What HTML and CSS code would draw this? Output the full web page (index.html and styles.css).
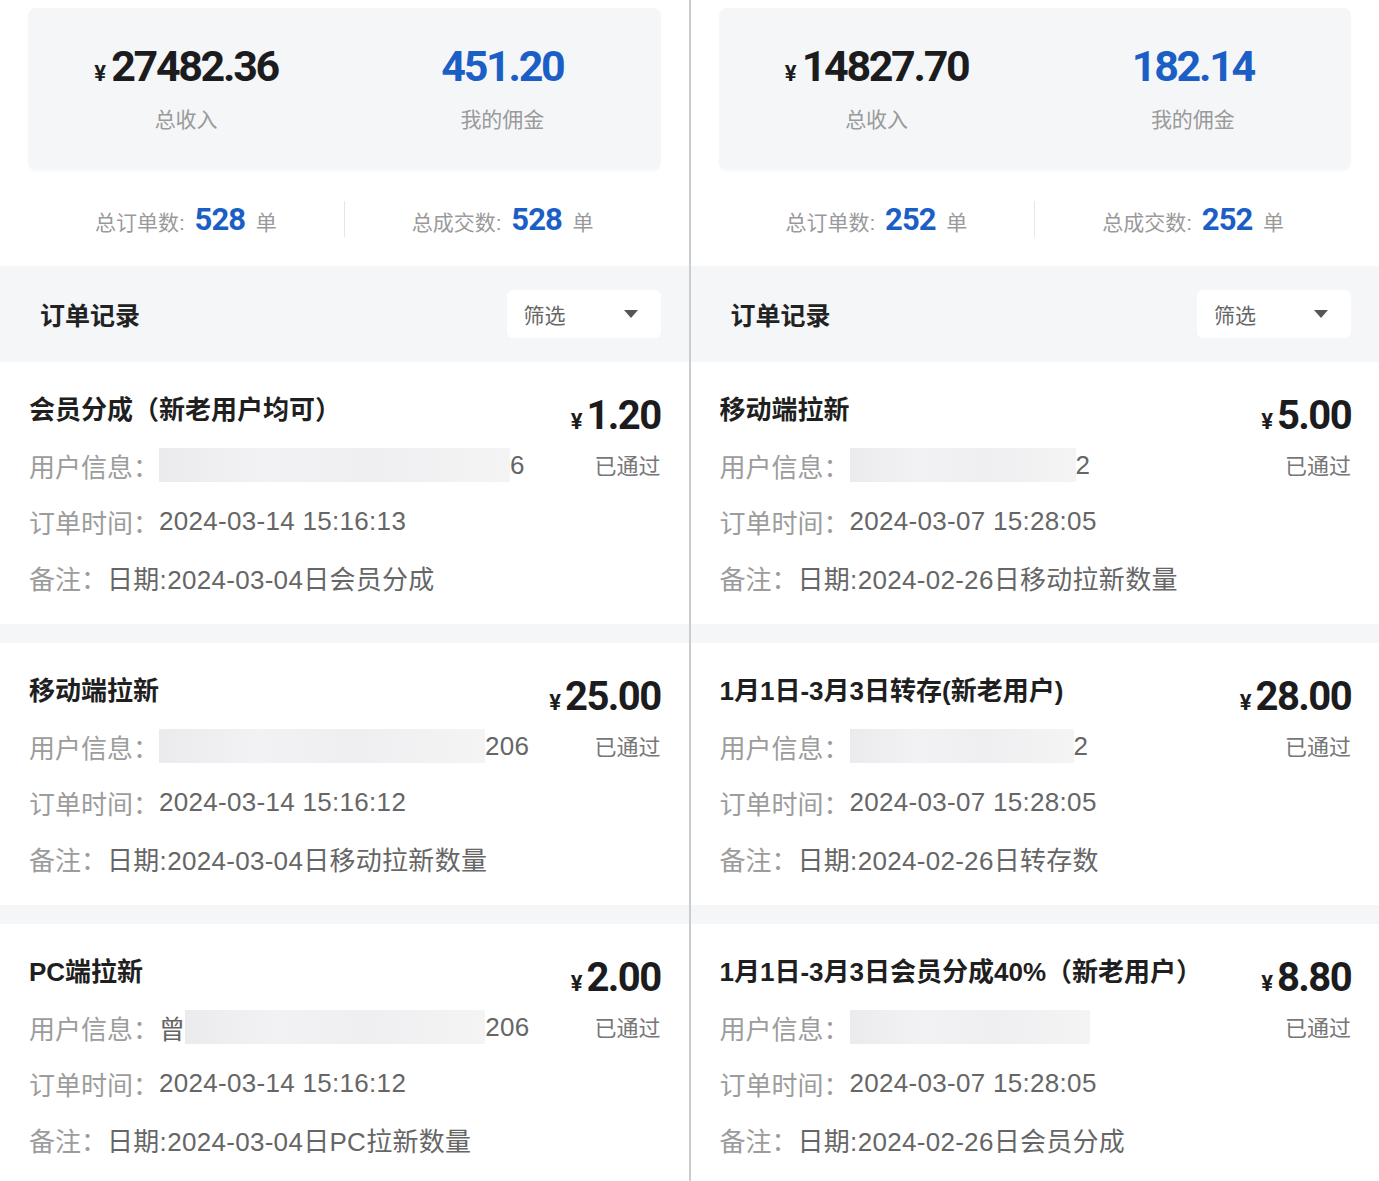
FILE: index.html
```html
<!DOCTYPE html>
<html lang="zh-CN">
<head>
    <meta charset="UTF-8">
    <meta name="viewport" content="width=device-width, initial-scale=1.0">
    <title>订单记录</title>
    <link rel="stylesheet" href="styles.css">
</head>
<body>
    <div class="page">
        <!-- left account -->
        <section class="panel">
            <div class="summary">
                <div class="summary-item">
                    <div class="amount"><span class="yen">¥</span>27482.36</div>
                    <div class="summary-label">总收入</div>
                </div>
                <div class="summary-item">
                    <div class="amount blue">451.20</div>
                    <div class="summary-label">我的佣金</div>
                </div>
            </div>
            <div class="stats">
                <div class="stat">总订单数: <span class="stat-num">528</span> 单</div>
                <div class="stat-divider"></div>
                <div class="stat">总成交数: <span class="stat-num">528</span> 单</div>
            </div>
            <div class="records-head">
                <h2>订单记录</h2>
                <div class="filter">
                    <span>筛选</span>
                    <svg width="14" height="8" viewBox="0 0 14 8"><path d="M0 0h14L7 8z" fill="#555"/></svg>
                </div>
            </div>
            <div class="orders">
                <div class="order">
                    <div class="order-top">
                        <div class="order-title">会员分成（新老用户均可）</div>
                        <div class="price"><span class="yen">¥</span>1.20</div>
                    </div>
                    <div class="order-row">
                        <div><span class="label">用户信息：</span><span class="mask" style="width: 351px"></span><span class="value">6</span></div>
                        <div class="status">已通过</div>
                    </div>
                    <div class="order-row"><div><span class="label">订单时间：</span><span class="value">2024-03-14 15:16:13</span></div></div>
                    <div class="order-row"><div><span class="label">备注：</span><span class="value">日期:2024-03-04日会员分成</span></div></div>
                </div>
                <div class="order">
                    <div class="order-top">
                        <div class="order-title">移动端拉新</div>
                        <div class="price"><span class="yen">¥</span>25.00</div>
                    </div>
                    <div class="order-row">
                        <div><span class="label">用户信息：</span><span class="mask" style="width: 326px"></span><span class="value">206</span></div>
                        <div class="status">已通过</div>
                    </div>
                    <div class="order-row"><div><span class="label">订单时间：</span><span class="value">2024-03-14 15:16:12</span></div></div>
                    <div class="order-row"><div><span class="label">备注：</span><span class="value">日期:2024-03-04日移动拉新数量</span></div></div>
                </div>
                <div class="order">
                    <div class="order-top">
                        <div class="order-title">PC端拉新</div>
                        <div class="price"><span class="yen">¥</span>2.00</div>
                    </div>
                    <div class="order-row">
                        <div><span class="label">用户信息：</span><span class="value">曾</span><span class="mask" style="width: 300px"></span><span class="value">206</span></div>
                        <div class="status">已通过</div>
                    </div>
                    <div class="order-row"><div><span class="label">订单时间：</span><span class="value">2024-03-14 15:16:12</span></div></div>
                    <div class="order-row"><div><span class="label">备注：</span><span class="value">日期:2024-03-04日PC拉新数量</span></div></div>
                </div>
            </div>
        </section>

        <div class="split"></div>

        <!-- right account -->
        <section class="panel">
            <div class="summary">
                <div class="summary-item">
                    <div class="amount"><span class="yen">¥</span>14827.70</div>
                    <div class="summary-label">总收入</div>
                </div>
                <div class="summary-item">
                    <div class="amount blue">182.14</div>
                    <div class="summary-label">我的佣金</div>
                </div>
            </div>
            <div class="stats">
                <div class="stat">总订单数: <span class="stat-num">252</span> 单</div>
                <div class="stat-divider"></div>
                <div class="stat">总成交数: <span class="stat-num">252</span> 单</div>
            </div>
            <div class="records-head">
                <h2>订单记录</h2>
                <div class="filter">
                    <span>筛选</span>
                    <svg width="14" height="8" viewBox="0 0 14 8"><path d="M0 0h14L7 8z" fill="#555"/></svg>
                </div>
            </div>
            <div class="orders">
                <div class="order">
                    <div class="order-top">
                        <div class="order-title">移动端拉新</div>
                        <div class="price"><span class="yen">¥</span>5.00</div>
                    </div>
                    <div class="order-row">
                        <div><span class="label">用户信息：</span><span class="mask" style="width: 226px"></span><span class="value">2</span></div>
                        <div class="status">已通过</div>
                    </div>
                    <div class="order-row"><div><span class="label">订单时间：</span><span class="value">2024-03-07 15:28:05</span></div></div>
                    <div class="order-row"><div><span class="label">备注：</span><span class="value">日期:2024-02-26日移动拉新数量</span></div></div>
                </div>
                <div class="order">
                    <div class="order-top">
                        <div class="order-title">1月1日-3月3日转存(新老用户)</div>
                        <div class="price"><span class="yen">¥</span>28.00</div>
                    </div>
                    <div class="order-row">
                        <div><span class="label">用户信息：</span><span class="mask" style="width: 224px"></span><span class="value">2</span></div>
                        <div class="status">已通过</div>
                    </div>
                    <div class="order-row"><div><span class="label">订单时间：</span><span class="value">2024-03-07 15:28:05</span></div></div>
                    <div class="order-row"><div><span class="label">备注：</span><span class="value">日期:2024-02-26日转存数</span></div></div>
                </div>
                <div class="order">
                    <div class="order-top">
                        <div class="order-title">1月1日-3月3日会员分成40%（新老用户）</div>
                        <div class="price"><span class="yen">¥</span>8.80</div>
                    </div>
                    <div class="order-row">
                        <div><span class="label">用户信息：</span><span class="mask" style="width: 240px"></span></div>
                        <div class="status">已通过</div>
                    </div>
                    <div class="order-row"><div><span class="label">订单时间：</span><span class="value">2024-03-07 15:28:05</span></div></div>
                    <div class="order-row"><div><span class="label">备注：</span><span class="value">日期:2024-02-26日会员分成</span></div></div>
                </div>
            </div>
        </section>
    </div>
</body>
</html>
```

FILE: styles.css
```css
body {
    margin: 0;
    padding: 0;
    background: #fff;
    font-family: "Liberation Sans", "Noto Sans CJK SC", sans-serif;
    color: #222;
}

.page {
    display: flex;
    width: 1379px;
    height: 1181px;
    overflow: hidden;
}

.panel {
    flex: 1;
    display: flex;
    flex-direction: column;
    background: #fff;
}

.split {
    width: 2px;
    background: #c9cdd2;
}

/* summary card */
.summary {
    display: flex;
    flex-shrink: 0;
    height: 162px;
    margin: 8px 28px 0;
    padding-top: 35px;
    box-sizing: border-box;
    background: #f5f6f8;
    border-radius: 8px;
    box-shadow: 0 2px 3px rgba(0, 0, 0, 0.02);
}

.summary-item {
    flex: 1;
    display: flex;
    flex-direction: column;
    align-items: center;
}

.amount {
    height: 46px;
    font-family: "Roboto", sans-serif;
    font-weight: 700;
    font-size: 43px;
    line-height: 46px;
    letter-spacing: -2.3px;
    color: #1c1c1e;
}

.amount .yen {
    font-size: 22px;
    line-height: 22px;
    margin-right: 5px;
    letter-spacing: 0;
}

.amount.blue {
    color: #1b5fc6;
}

.summary-label {
    margin-top: 16px;
    font-size: 21px;
    line-height: 30px;
    color: #9a9a9a;
}

/* stats row */
.stats {
    display: flex;
    flex-shrink: 0;
    align-items: center;
    height: 96px;
    padding: 2px 28px 0;
    box-sizing: border-box;
}

.stat {
    flex: 1;
    text-align: center;
    font-size: 21px;
    color: #9a9a9a;
}

.stat-num {
    font-family: "Roboto", sans-serif;
    font-weight: 700;
    font-size: 31px;
    letter-spacing: -1px;
    color: #1b5fc6;
    margin: 0 5px 0 4px;
}

.stat-divider {
    width: 1px;
    height: 36px;
    background: #e6e6e6;
}

/* records header */
.records-head {
    display: flex;
    flex-shrink: 0;
    align-items: center;
    justify-content: space-between;
    height: 96px;
    padding: 0 28px 0 40px;
    box-sizing: border-box;
    background: #f5f6f8;
}

.records-head h2 {
    margin: 0;
    font-size: 25px;
    font-weight: 700;
    color: #222;
}

.filter {
    display: flex;
    align-items: center;
    justify-content: space-between;
    width: 154px;
    height: 48px;
    padding: 0 23px 0 17px;
    box-sizing: border-box;
    background: #fff;
    border-radius: 6px;
    font-size: 21px;
    color: #666;
}

/* order cards */
.orders {
    flex: 1;
    display: flex;
    flex-direction: column;
    gap: 19px;
    background: #f5f6f8;
}

.order {
    flex-shrink: 0;
    height: 262px;
    padding: 29px 28px 0 29px;
    box-sizing: border-box;
    background: #fff;
}

.order-top {
    display: flex;
    justify-content: space-between;
    align-items: flex-start;
    height: 46px;
}

.order-title {
    font-size: 26px;
    line-height: 38px;
    font-weight: 600;
    color: #1f1f1f;
}

.price {
    margin-top: 4px;
    font-family: "Roboto", sans-serif;
    font-weight: 700;
    font-size: 40px;
    line-height: 42px;
    letter-spacing: -1.6px;
    color: #1c1c1e;
}

.price .yen {
    font-size: 22px;
    margin-right: 4px;
    letter-spacing: 0;
}

.order-row {
    display: flex;
    justify-content: space-between;
    align-items: center;
    height: 56px;
    font-size: 26px;
}

.order-row > div {
    display: flex;
    align-items: center;
}

.label {
    color: #9c9c9c;
}

.value {
    color: #666;
    letter-spacing: 0.3px;
}

.mask {
    display: inline-block;
    height: 34px;
    background: linear-gradient(90deg, #ebebed 0%, #f2f2f4 30%, #efeff1 60%, #f4f4f5 100%);
}

.status {
    font-size: 22px;
    color: #777;
    margin-top: -2px;
}
```
